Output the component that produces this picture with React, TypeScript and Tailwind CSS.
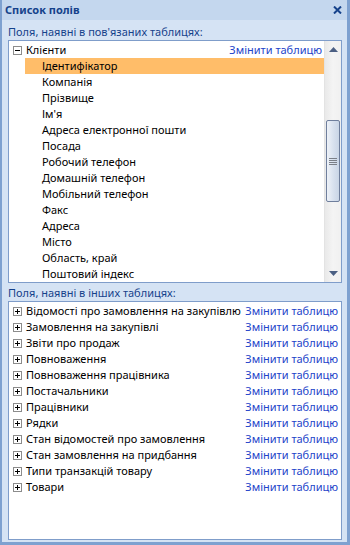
import React from 'react'

const FONT = { fontFamily: '"Noto Sans", "Open Sans", Arial, sans-serif' }

const relatedFields = [
  'Ідентифікатор',
  'Компанія',
  'Прізвище',
  "Ім'я",
  'Адреса електронної пошти',
  'Посада',
  'Робочий телефон',
  'Домашній телефон',
  'Мобільний телефон',
  'Факс',
  'Адреса',
  'Місто',
  'Область, край',
  'Поштовий індекс',
]

const otherTables = [
  'Відомості про замовлення на закупівлю',
  'Замовлення на закупівлі',
  'Звіти про продаж',
  'Повноваження',
  'Повноваження працівника',
  'Постачальники',
  'Працівники',
  'Рядки',
  'Стан відомостей про замовлення',
  'Стан замовлення на придбання',
  'Типи транзакцій товару',
  'Товари',
]

function ExpandBox({ open }: { open: boolean }) {
  return (
    <svg width="9" height="9" viewBox="0 0 9 9" className="shrink-0">
      <rect x="0.5" y="0.5" width="8" height="8" fill="#fff" stroke="#8c8c8c" />
      <line x1="2" y1="4.5" x2="7" y2="4.5" stroke="#000" />
      {!open && <line x1="4.5" y1="2" x2="4.5" y2="7" stroke="#000" />}
    </svg>
  )
}

function Arrow({ up }: { up: boolean }) {
  return (
    <svg width="9" height="5" viewBox="0 0 9 5">
      {up ? <polygon points="0,5 9,5 4.5,0" fill="#4b5f83" /> : <polygon points="0,0 9,0 4.5,5" fill="#4b5f83" />}
    </svg>
  )
}

function Scrollbar() {
  return (
    <div className="w-[17px] shrink-0 flex flex-col bg-gradient-to-r from-[#e9e9e9] via-[#f4f4f4] to-[#f0f0f0] border-l border-[#e3e3e3]">
      <div className="h-[17px] flex items-center justify-center">
        <Arrow up />
      </div>
      <div className="flex-1 flex flex-col px-px">
        <div className="mt-[62px] h-[82px] rounded-[2px] border border-[#6f7f9d] bg-gradient-to-r from-[#eef2f8] via-[#d9e2ef] to-[#c9d5e6] flex flex-col items-center justify-center gap-[1px]">
          <div className="w-[8px] h-px bg-[#7a7f88]" />
          <div className="w-[8px] h-px bg-[#7a7f88]" />
          <div className="w-[8px] h-px bg-[#7a7f88]" />
          <div className="w-[8px] h-px bg-[#7a7f88]" />
        </div>
      </div>
      <div className="h-[17px] flex items-center justify-center">
        <Arrow up={false} />
      </div>
    </div>
  )
}

function ChangeLink() {
  return <span className="text-[#2243c9] whitespace-nowrap">Змінити таблицю</span>
}

export default function App() {
  return (
    <div
      className="w-[350px] h-[545px] flex flex-col bg-[#d5e3f4] border-l-2 border-r-[3px] border-b-[3px] border-[#7ea1d0] text-[11px] overflow-hidden"
      style={FONT}
    >
      {/* Title bar */}
      <div className="h-[20px] shrink-0 flex items-center justify-between bg-[#c4d7ee] pl-[3px] pr-[5px]">
        <span className="font-bold text-[#15428b] text-[11px]">Список полів</span>
        <svg width="9" height="8" viewBox="0 0 9 8">
          <path d="M1 0.5 L8 7.5 M8 0.5 L1 7.5" stroke="#15428b" strokeWidth="2" />
        </svg>
      </div>

      <div className="flex-1 flex flex-col pl-[6px] pr-[5px] pb-[2px]">
        <div className="h-[20px] shrink-0 flex items-end pb-px text-[#15428b] leading-[15px]">
          Поля, наявні в пов'язаних таблицях:
        </div>

        {/* Related tables box */}
        <div className="h-[243px] shrink-0 flex bg-white border border-[#7f9dca]">
          <div className="flex-1 flex flex-col overflow-hidden pt-px">
            <div className="h-[16px] shrink-0 flex items-center pl-[4px] pr-[2px] leading-[16px]">
              <ExpandBox open />
              <span className="ml-[4px] text-black">Клієнти</span>
              <span className="ml-auto">
                <ChangeLink />
              </span>
            </div>
            {relatedFields.map((f, i) => (
              <div
                key={f}
                className={
                  'h-[16px] shrink-0 flex items-center pl-[17px] ml-[16px] leading-[16px] text-black ' +
                  (i === 0 ? 'bg-[#ffbd69]' : '')
                }
              >
                {f}
              </div>
            ))}
          </div>
          <Scrollbar />
        </div>

        <div className="h-[18px] shrink-0 flex items-center text-[#15428b] leading-[15px]">
          Поля, наявні в інших таблицях:
        </div>

        {/* Other tables box */}
        <div className="flex-1 flex flex-col bg-white border border-[#7f9dca] pt-[1px] pl-[4px] pr-[3px]">
          {otherTables.map((t) => (
            <div key={t} className="h-[16px] shrink-0 flex items-center leading-[16px]">
              <ExpandBox open={false} />
              <span className="ml-[4px] whitespace-nowrap text-black">{t}</span>
              <span className="ml-auto pl-[2px]">
                <ChangeLink />
              </span>
            </div>
          ))}
        </div>
      </div>
    </div>
  )
}
